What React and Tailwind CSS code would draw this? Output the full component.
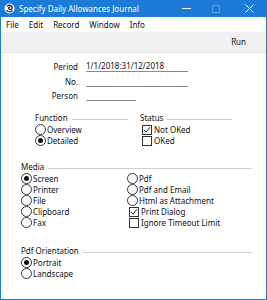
import React from "react";

const font = { fontFamily: '"Noto Sans", "Open Sans", sans-serif' };

function Radio({ checked, label }) {
  return (
    <div className="flex items-center h-[11px]">
      <span className="w-[11px] h-[11px] rounded-full border border-[#333] bg-white flex items-center justify-center shrink-0">
        {checked && <span className="w-[5px] h-[5px] rounded-full bg-[#111]" />}
      </span>
      <span className="ml-[1px] text-[8px] leading-none text-[#111]">{label}</span>
    </div>
  );
}

function Check({ checked, label }) {
  return (
    <div className="flex items-center h-[11px]">
      <span className="ml-[2px] w-[10px] h-[10px] border border-[#333] bg-white flex items-center justify-center shrink-0">
        {checked && (
          <svg width="8" height="8" viewBox="0 0 8 8">
            <path d="M1 4 L3 6.2 L7 1.2" fill="none" stroke="#222" strokeWidth="1" />
          </svg>
        )}
      </span>
      <span className="ml-[2px] text-[8px] leading-none text-[#111]">{label}</span>
    </div>
  );
}

function Header({ label, width }) {
  return (
    <div className="flex items-center h-[12px]" style={{ width }}>
      <span className="text-[8px] leading-none text-[#111]">{label}</span>
      <span className="flex-1 ml-[4px] mt-[3px] h-px bg-[#cfcfcf]" />
    </div>
  );
}

export default function App() {
  return (
    <div className="w-[267px] h-[300px] bg-white flex flex-col overflow-hidden" style={font}>
      {/* Title bar */}
      <div className="h-[17px] bg-[#1b7bd6] flex items-center shrink-0 relative">
        <svg className="ml-[4px]" width="11" height="11" viewBox="0 0 11 11">
          <circle cx="5.5" cy="5.5" r="5" fill="#fff" />
          <path d="M3 3.2 C5 1.5 8.5 2.5 8.3 5 C8 7 5.5 7 4.8 5.6 C4.3 4.5 5.5 3.8 6.2 4.6" fill="none" stroke="#333" strokeWidth="1.5" />
          <path d="M2.5 7 C3.5 9 6.5 9.5 8.5 7.5" fill="none" stroke="#333" strokeWidth="1.2" />
        </svg>
        <span className="ml-[4px] text-[8px] leading-none text-white">Specify Daily Allowances Journal</span>
        <div className="ml-auto flex items-center h-full">
          <span className="w-[9px] h-px bg-white mr-[21px]" />
          <span className="w-[8px] h-[8px] border border-[#5b9fe3] mr-[25px]" />
          <svg className="mr-[13px]" width="9" height="9" viewBox="0 0 9 9">
            <path d="M0.5 0.5 L8.5 8.5 M8.5 0.5 L0.5 8.5" stroke="#fff" strokeWidth="1" />
          </svg>
        </div>
      </div>
      <div className="flex-1 flex flex-col border-x border-b border-[#1b7bd6]">
        {/* Menu bar */}
        <div className="h-[15px] flex items-center text-[8px] leading-none text-[#111] shrink-0">
          <span className="ml-[5px]">File</span>
          <span className="ml-[10px]">Edit</span>
          <span className="ml-[10px]">Record</span>
          <span className="ml-[10px]">Window</span>
          <span className="ml-[10px]">Info</span>
        </div>
        {/* Toolbar */}
        <div className="h-[21px] bg-[#f0f0f0] border-b border-[#e3e3e3] flex items-center justify-end shrink-0">
          <span className="mr-[20px] text-[8px] leading-none text-[#111]">Run</span>
        </div>
        {/* Form */}
        <div className="flex flex-col">
          <div className="mt-[7px] h-[14px] flex items-center">
            <span className="w-[77px] text-right text-[8px] leading-none text-[#111]">Period</span>
            <span className="ml-[8px] w-[102px] h-[10px] border-b border-[#8a8a8a] text-[8px] leading-none text-[#111] flex items-end pb-[1px]">1/1/2018:31/12/2018</span>
          </div>
          <div className="h-[15px] flex items-center">
            <span className="w-[77px] text-right text-[8px] leading-none text-[#111]">No.</span>
            <span className="ml-[8px] w-[102px] h-[10px] border-b border-[#8a8a8a]" />
          </div>
          <div className="h-[14px] flex items-center">
            <span className="w-[77px] text-right text-[8px] leading-none text-[#111]">Person</span>
            <span className="ml-[8px] w-[50px] h-[10px] border-b border-[#8a8a8a]" />
          </div>
          {/* Function / Status */}
          <div className="mt-[9px] flex pl-[34px]">
            <div className="flex flex-col w-[93px]">
              <Header label="Function" width={93} />
              <Radio label="Overview" />
              <Radio checked label="Detailed" />
            </div>
            <div className="flex flex-col ml-[12px] w-[92px]">
              <Header label="Status" width={92} />
              <Check checked label="Not OKed" />
              <Check label="OKed" />
            </div>
          </div>
          {/* Media */}
          <div className="mt-[15px] flex flex-col pl-[20px]">
            <Header label="Media" width={231} />
            <div className="flex">
              <div className="flex flex-col w-[106px]">
                <Radio checked label="Screen" />
                <Radio label="Printer" />
                <Radio label="File" />
                <Radio label="Clipboard" />
                <Radio label="Fax" />
              </div>
              <div className="flex flex-col">
                <Radio label="Pdf" />
                <Radio label="Pdf and Email" />
                <Radio label="Html as Attachment" />
                <Check checked label="Print Dialog" />
                <Check label="Ignore Timeout Limit" />
              </div>
            </div>
          </div>
          {/* Pdf Orientation */}
          <div className="mt-[17px] flex flex-col pl-[20px]">
            <Header label="Pdf Orientation" width={231} />
            <Radio checked label="Portrait" />
            <Radio label="Landscape" />
          </div>
        </div>
      </div>
    </div>
  );
}
